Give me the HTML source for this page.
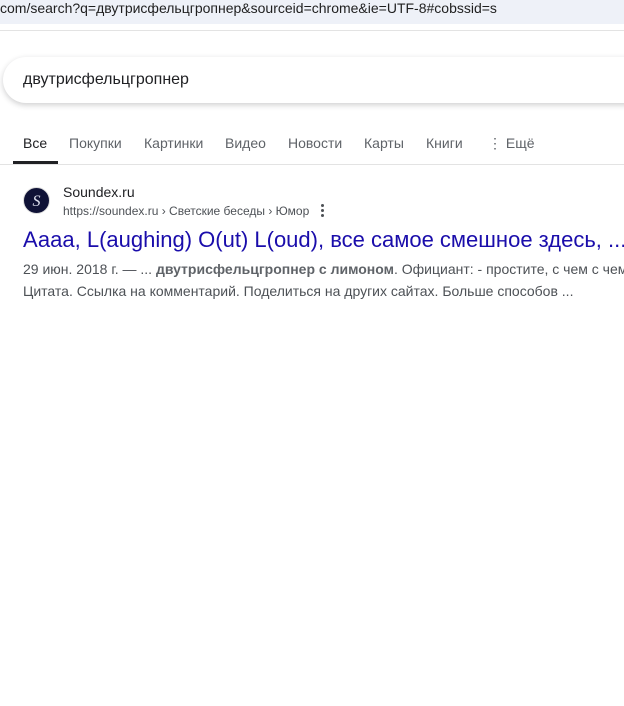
<!DOCTYPE html>
<html><head><meta charset="utf-8"><style>
*{margin:0;padding:0;box-sizing:border-box}
body{width:624px;height:706px;overflow:hidden;background:#fff;font-family:"Liberation Sans",Arial,sans-serif;position:relative}
.addr{position:absolute;left:0;top:0;width:624px;height:24px;background:#eef1f8;font-size:14px;color:#1f1f1f;line-height:16px;white-space:nowrap;letter-spacing:0px}
.sep{position:absolute;left:0;top:30px;width:624px;height:1px;background:#e3e3e3}
.search{position:absolute;left:3px;top:57px;width:660px;height:46px;border-radius:24px;background:#fff;box-shadow:0 2px 6px rgba(32,33,36,.22);font-size:16px;color:#202124;line-height:46px;padding-left:20px}
.tabs{position:absolute;top:135px;left:0;font-size:14px;color:#5f6368;white-space:nowrap}
.tabs span{position:absolute;top:0}
.ul{position:absolute;left:13px;top:161px;width:45px;height:3px;background:#202124}
.tline{position:absolute;left:0;top:164px;width:624px;height:1px;background:#e3e3e3}
.fav{position:absolute;left:23px;top:187px;width:27px;height:27px;border-radius:50%;background:#0f1236;color:#dfe2f0;font-family:"Liberation Serif",serif;font-style:italic;font-size:16px;text-align:center;line-height:27px;border:1px solid #ddd}
.site{position:absolute;left:63px;top:184px;font-size:14px;color:#202124}
.url{position:absolute;left:63px;top:204px;font-size:12px;color:#4d5156}
.dots{position:absolute;left:321px;top:204px;width:3px}
.dots i{display:block;width:3px;height:3px;background:#4d5156;border-radius:50%;margin-bottom:2px}
.title{position:absolute;left:23px;top:227px;font-size:22px;color:#1a0dab;white-space:nowrap}
.snip{position:absolute;left:23px;top:258px;font-size:14px;color:#4d5156;line-height:22px;white-space:nowrap}
.snip b{color:#5f6368}
</style></head><body>
<div class="addr">com/search?q=двутрисфельцгропнер&amp;sourceid=chrome&amp;ie=UTF-8#cobssid=s</div>
<div class="sep"></div>
<div class="search">двутрисфельцгропнер</div>
<div class="tabs">
<span style="left:23px;color:#202124">Все</span>
<span style="left:69px">Покупки</span>
<span style="left:144px">Картинки</span>
<span style="left:225px">Видео</span>
<span style="left:288px">Новости</span>
<span style="left:364px">Карты</span>
<span style="left:426px">Книги</span>
<span style="left:488px">⋮ Ещё</span>
</div>
<div class="ul"></div>
<div class="tline"></div>
<div class="fav">S</div>
<div class="site">Soundex.ru</div>
<div class="url">https://soundex.ru › Светские беседы › Юмор</div>
<div class="dots"><i></i><i></i><i></i></div>
<div class="title">Аааа, L(aughing) O(ut) L(oud), все самое смешное здесь, ...</div>
<div class="snip">29 июн. 2018 г. — ... <b>двутрисфельцгропнер с лимоном</b>. Официант: - простите, с чем с чем<br>Цитата. Ссылка на комментарий. Поделиться на других сайтах. Больше способов ...</div>
</body></html>
